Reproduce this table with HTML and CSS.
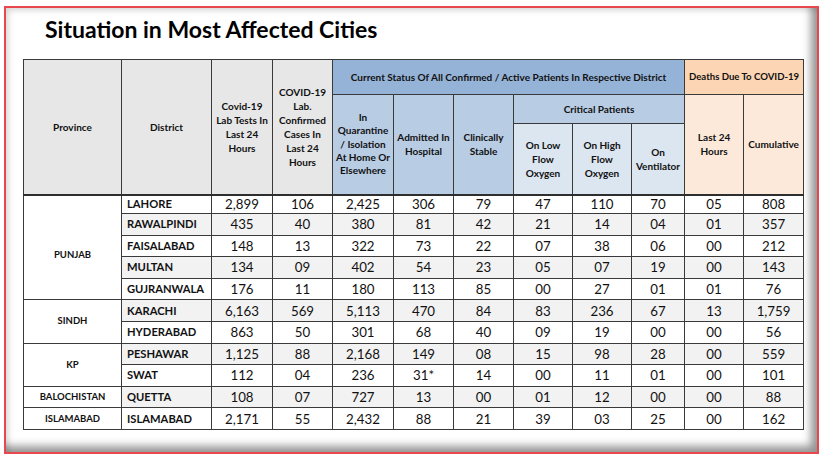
FILE: index.html
```html
<!DOCTYPE html>
<html lang="en">
<head>
<meta charset="utf-8">
<title>Situation in Most Affected Cities</title>
<link rel="stylesheet" href="styles.css">
</head>
<body>
<div class="frame">
  <h1 class="title">Situation in Most Affected Cities</h1>
  <table class="sheet">
    <colgroup>
      <col class="c-prov"><col class="c-dist"><col class="c-61"><col class="c-60"><col class="c-61"><col class="c-60"><col class="c-60"><col class="c-59"><col class="c-59"><col class="c-53"><col class="c-59"><col class="c-60">
    </colgroup>
    <thead>
      <tr class="h1">
        <th rowspan="3" class="gray">Province</th>
        <th rowspan="3" class="gray">District</th>
        <th rowspan="3" class="gray">Covid-19<br>Lab Tests In<br>Last 24<br>Hours</th>
        <th rowspan="3" class="gray">COVID-19<br>Lab.<br>Confirmed<br>Cases In<br>Last 24<br>Hours</th>
        <th colspan="6" class="blue">Current Status Of All Confirmed / Active Patients In Respective District</th>
        <th colspan="2" class="orange small">Deaths Due To COVID-19</th>
      </tr>
      <tr class="h2">
        <th rowspan="2" class="mid tight">In<br>Quarantine<br>/ Isolation<br>At Home Or<br>Elsewhere</th>
        <th rowspan="2" class="mid">Admitted In<br>Hospital</th>
        <th rowspan="2" class="mid">Clinically<br>Stable</th>
        <th colspan="3" class="mid">Critical Patients</th>
        <th rowspan="2" class="peach">Last 24<br>Hours</th>
        <th rowspan="2" class="peach">Cumulative</th>
      </tr>
      <tr class="h3">
        <th class="pale">On Low<br>Flow<br>Oxygen</th>
        <th class="pale">On High<br>Flow<br>Oxygen</th>
        <th class="pale">On<br>Ventilator</th>
      </tr>
    </thead>
    <tbody>
      <tr class="first">
        <td rowspan="5" class="prov prov-punjab">PUNJAB</td>
        <td class="dist">LAHORE</td><td>2,899</td><td>106</td><td>2,425</td><td>306</td><td>79</td><td>47</td><td>110</td><td>70</td><td>05</td><td>808</td>
      </tr>
      <tr class="alt">
        <td class="dist">RAWALPINDI</td><td>435</td><td>40</td><td>380</td><td>81</td><td>42</td><td>21</td><td>14</td><td>04</td><td>01</td><td>357</td>
      </tr>
      <tr>
        <td class="dist">FAISALABAD</td><td>148</td><td>13</td><td>322</td><td>73</td><td>22</td><td>07</td><td>38</td><td>06</td><td>00</td><td>212</td>
      </tr>
      <tr class="alt">
        <td class="dist">MULTAN</td><td>134</td><td>09</td><td>402</td><td>54</td><td>23</td><td>05</td><td>07</td><td>19</td><td>00</td><td>143</td>
      </tr>
      <tr>
        <td class="dist">GUJRANWALA</td><td>176</td><td>11</td><td>180</td><td>113</td><td>85</td><td>00</td><td>27</td><td>01</td><td>01</td><td>76</td>
      </tr>
      <tr class="alt">
        <td rowspan="2" class="prov">SINDH</td>
        <td class="dist">KARACHI</td><td>6,163</td><td>569</td><td>5,113</td><td>470</td><td>84</td><td>83</td><td>236</td><td>67</td><td>13</td><td>1,759</td>
      </tr>
      <tr>
        <td class="dist">HYDERABAD</td><td>863</td><td>50</td><td>301</td><td>68</td><td>40</td><td>09</td><td>19</td><td>00</td><td>00</td><td>56</td>
      </tr>
      <tr class="alt">
        <td rowspan="2" class="prov">KP</td>
        <td class="dist">PESHAWAR</td><td>1,125</td><td>88</td><td>2,168</td><td>149</td><td>08</td><td>15</td><td>98</td><td>28</td><td>00</td><td>559</td>
      </tr>
      <tr>
        <td class="dist">SWAT</td><td>112</td><td>04</td><td>236</td><td>31*</td><td>14</td><td>00</td><td>11</td><td>01</td><td>00</td><td>101</td>
      </tr>
      <tr class="alt">
        <td class="prov">BALOCHISTAN</td>
        <td class="dist">QUETTA</td><td>108</td><td>07</td><td>727</td><td>13</td><td>00</td><td>01</td><td>12</td><td>00</td><td>00</td><td>88</td>
      </tr>
      <tr>
        <td class="prov">ISLAMABAD</td>
        <td class="dist">ISLAMABAD</td><td>2,171</td><td>55</td><td>2,432</td><td>88</td><td>21</td><td>39</td><td>03</td><td>25</td><td>00</td><td>162</td>
      </tr>
    </tbody>
  </table>
</div>
</body>
</html>
```

FILE: styles.css
```css
* { box-sizing: border-box; }

html, body {
  margin: 0;
  padding: 0;
  background: #ffffff;
}

body {
  font-family: Lato, "Open Sans", "Liberation Sans", sans-serif;
  color: #111111;
}

.frame {
  margin: 6px 0 0 4px;
  width: 815px;
  height: 448px;
  border: 2px solid #e8474d;
  box-shadow:
    inset 5px 5px 6px -3px rgba(0, 0, 0, 0.18),
    inset -10px -10px 9px -4px rgba(0, 0, 0, 0.42);
  padding: 8px 14px 0 17px;
}

.title {
  margin: 0 0 17px 22px;
  font-size: 23px;
  font-weight: 700;
  line-height: 26px;
  color: #000000;
}

.sheet {
  width: 780px;
  border-collapse: collapse;
  table-layout: fixed;
}

.c-prov { width: 98px; }
.c-dist { width: 90px; }
.c-61 { width: 61px; }
.c-60 { width: 60px; }
.c-59 { width: 59px; }
.c-53 { width: 53px; }

.sheet th,
.sheet td {
  border: 1px solid #3a3a3a;
  padding: 0 1px;
  text-align: center;
  vertical-align: middle;
  overflow: hidden;
  white-space: nowrap;
}

.sheet th {
  font-size: 10px;
  font-weight: 700;
  line-height: 14px;
  color: #111111;
}

.sheet th.tight { line-height: 13.4px; }
.sheet th.small { font-size: 9.6px; }

.h1 { height: 35px; }
.h2 { height: 29px; }
.h3 { height: 71px; }

.sheet thead tr.h3 th,
.sheet thead th[rowspan="3"],
.sheet thead th[rowspan="2"] {
  border-bottom: 2px solid #2e2e2e;
}

.gray { background: #e7e7e7; }
.blue { background: #95b3d7; }
.mid { background: #b8cce4; }
.pale { background: #dce6f1; }
.orange { background: #fcd5b4; }
.peach { background: #fde9d9; }

.sheet tbody tr { height: 21.6px; }
.sheet tbody tr.first { height: 19px; }

.sheet td {
  font-size: 13.3px;
  font-weight: 400;
  line-height: 14px;
  background: #ffffff;
}

.sheet tr.alt td { background: #f2f2f2; }
.sheet tr.alt td.prov { background: #ffffff; }

.sheet td.dist {
  text-align: left;
  padding-left: 5px;
  font-size: 11.2px;
  font-weight: 700;
}

.sheet td.prov {
  font-size: 9.5px;
  font-weight: 700;
}

.sheet td.prov-punjab { padding-top: 16px; }
```
